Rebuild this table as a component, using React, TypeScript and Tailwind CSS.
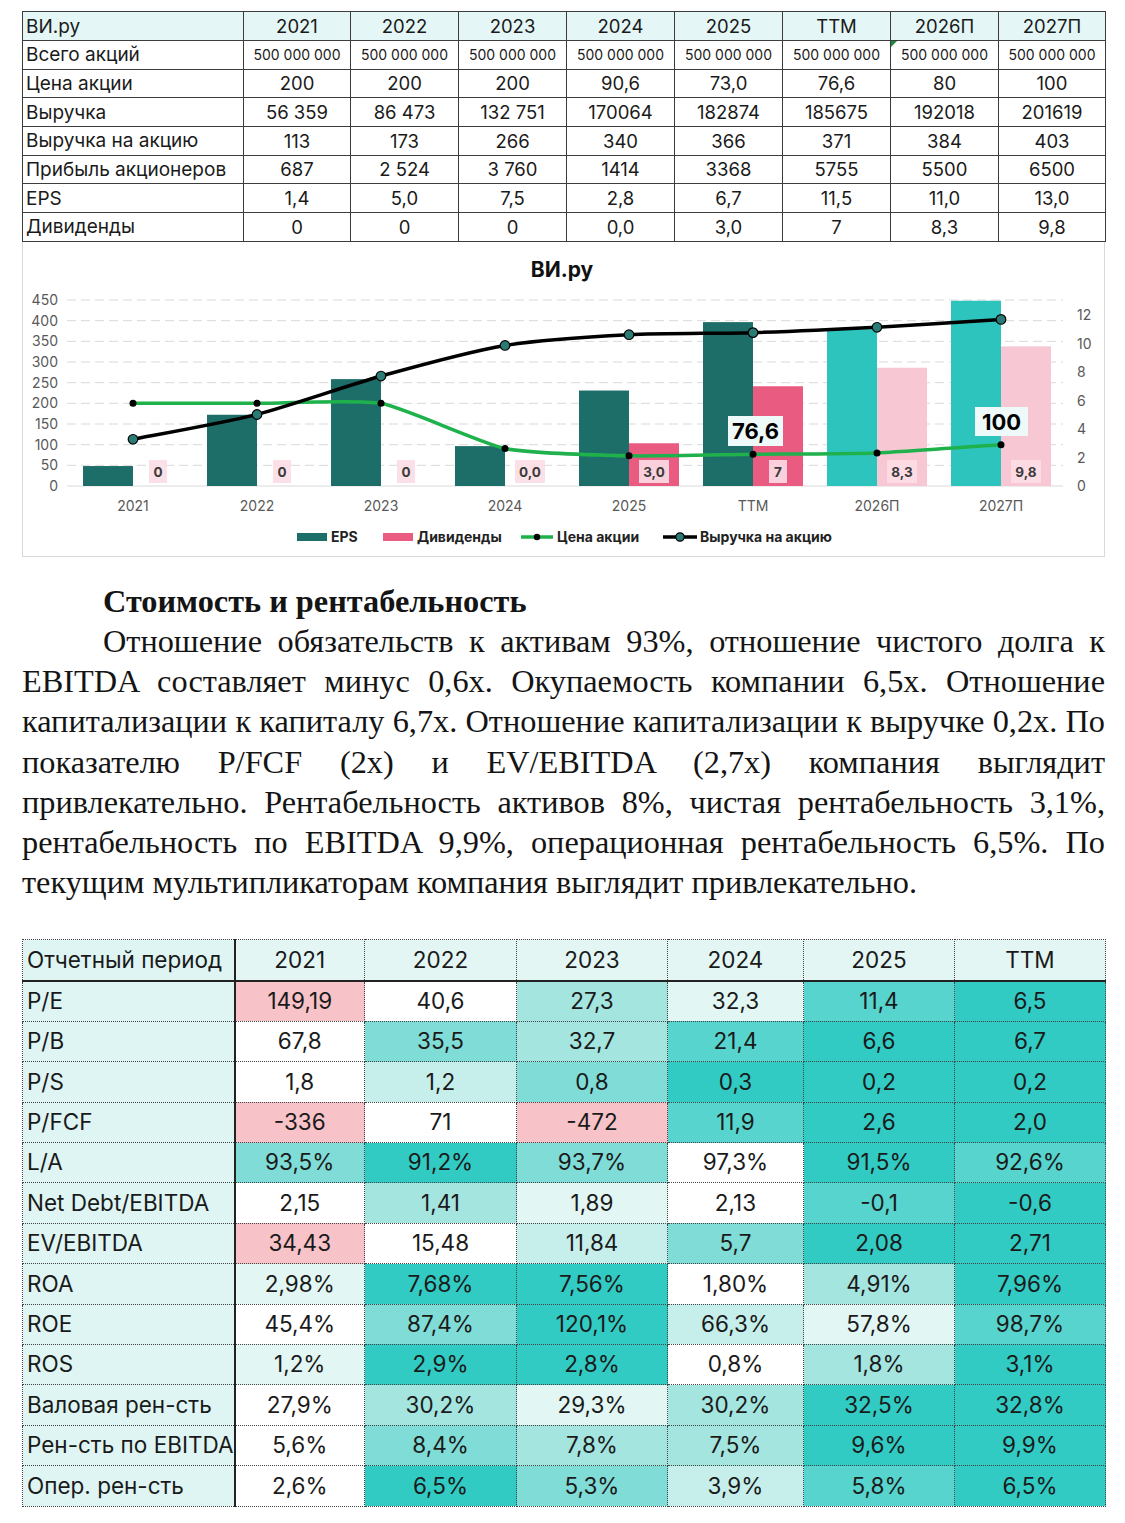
import React from "react";

const cats = ["2021", "2022", "2023", "2024", "2025", "TTM", "2026П", "2027П"];

const topRows: { label: string; vals: string[]; small?: boolean }[] = [
  { label: "Всего акций", vals: Array(8).fill("500 000 000"), small: true },
  { label: "Цена акции", vals: ["200", "200", "200", "90,6", "73,0", "76,6", "80", "100"] },
  { label: "Выручка", vals: ["56 359", "86 473", "132 751", "170064", "182874", "185675", "192018", "201619"] },
  { label: "Выручка на акцию", vals: ["113", "173", "266", "340", "366", "371", "384", "403"] },
  { label: "Прибыль акционеров", vals: ["687", "2 524", "3 760", "1414", "3368", "5755", "5500", "6500"] },
  { label: "EPS", vals: ["1,4", "5,0", "7,5", "2,8", "6,7", "11,5", "11,0", "13,0"] },
  { label: "Дивиденды", vals: ["0", "0", "0", "0,0", "3,0", "7", "8,3", "9,8"] },
];

const bg: Record<string, string> = {
  w: "bg-white",
  p: "bg-[#f7c2c8]",
  l1: "bg-[#e2f6f4]",
  l2: "bg-[#c6efeb]",
  m1: "bg-[#a4e5e0]",
  m2: "bg-[#80dcd6]",
  d1: "bg-[#56d4cd]",
  d2: "bg-[#31cbc4]",
};

const bottomHead = ["2021", "2022", "2023", "2024", "2025", "TTM"];
const bottomRows: { label: string; cells: [string, string][] }[] = [
  { label: "P/E", cells: [["149,19", "p"], ["40,6", "w"], ["27,3", "m1"], ["32,3", "l1"], ["11,4", "d1"], ["6,5", "d2"]] },
  { label: "P/B", cells: [["67,8", "w"], ["35,5", "m2"], ["32,7", "m1"], ["21,4", "d1"], ["6,6", "d2"], ["6,7", "d2"]] },
  { label: "P/S", cells: [["1,8", "w"], ["1,2", "l2"], ["0,8", "m2"], ["0,3", "d2"], ["0,2", "d2"], ["0,2", "d2"]] },
  { label: "P/FCF", cells: [["-336", "p"], ["71", "w"], ["-472", "p"], ["11,9", "d1"], ["2,6", "d2"], ["2,0", "d2"]] },
  { label: "L/A", cells: [["93,5%", "m2"], ["91,2%", "d2"], ["93,7%", "m2"], ["97,3%", "w"], ["91,5%", "d2"], ["92,6%", "d1"]] },
  { label: "Net Debt/EBITDA", cells: [["2,15", "w"], ["1,41", "m1"], ["1,89", "l1"], ["2,13", "w"], ["-0,1", "d1"], ["-0,6", "d2"]] },
  { label: "EV/EBITDA", cells: [["34,43", "p"], ["15,48", "w"], ["11,84", "l2"], ["5,7", "m2"], ["2,08", "d2"], ["2,71", "d2"]] },
  { label: "ROA", cells: [["2,98%", "l1"], ["7,68%", "d2"], ["7,56%", "d2"], ["1,80%", "w"], ["4,91%", "m1"], ["7,96%", "d2"]] },
  { label: "ROE", cells: [["45,4%", "w"], ["87,4%", "m2"], ["120,1%", "d2"], ["66,3%", "l2"], ["57,8%", "l1"], ["98,7%", "d1"]] },
  { label: "ROS", cells: [["1,2%", "l1"], ["2,9%", "d2"], ["2,8%", "d2"], ["0,8%", "w"], ["1,8%", "m1"], ["3,1%", "d2"]] },
  { label: "Валовая рен-сть", cells: [["27,9%", "w"], ["30,2%", "m1"], ["29,3%", "l1"], ["30,2%", "m1"], ["32,5%", "d2"], ["32,8%", "d2"]] },
  { label: "Рен-сть по EBITDA", cells: [["5,6%", "w"], ["8,4%", "m2"], ["7,8%", "m1"], ["7,5%", "m1"], ["9,6%", "d2"], ["9,9%", "d2"]] },
  { label: "Опер. рен-сть", cells: [["2,6%", "w"], ["6,5%", "d2"], ["5,3%", "m2"], ["3,9%", "l2"], ["5,8%", "d1"], ["6,5%", "d2"]] },
];

const eps = [1.4, 5.0, 7.5, 2.8, 6.7, 11.5, 11.0, 13.0];
const divs = [0, 0, 0, 0, 3.0, 7, 8.3, 9.8];
const divLabels = ["0", "0", "0", "0,0", "3,0", "7", "8,3", "9,8"];
const price = [200, 200, 200, 90.6, 73, 76.6, 80, 100];
const rev = [113, 173, 266, 340, 366, 371, 384, 403];

const BASE = 487;
const cx = (i: number) => 133 + 124 * i;
const yl = (v: number) => BASE - v * (186 / 450);
const yr = (v: number) => BASE - v * 14.25;

function smooth(pts: [number, number][], k: number) {
  let d = `M${pts[0][0]},${pts[0][1]}`;
  for (let i = 0; i < pts.length - 1; i++) {
    const p0 = pts[i - 1] || pts[i];
    const p1 = pts[i];
    const p2 = pts[i + 1];
    const p3 = pts[i + 2] || p2;
    const c1x = p1[0] + (p2[0] - p0[0]) * k;
    const c1y = p1[1] + (p2[1] - p0[1]) * k;
    const c2x = p2[0] - (p3[0] - p1[0]) * k;
    const c2y = p2[1] - (p3[1] - p1[1]) * k;
    d += ` C${c1x},${c1y} ${c2x},${c2y} ${p2[0]},${p2[1]}`;
  }
  return d;
}

function Chart() {
  const pricePts = price.map((v, i) => [cx(i), yl(v)] as [number, number]);
  const revPts = rev.map((v, i) => [cx(i), yl(v)] as [number, number]);
  const font = "Inter, 'Noto Sans', sans-serif";
  return (
    <svg width={1081} height={314} viewBox="23 243 1081 314" className="block" style={{ fontFamily: font }}>
      <text x={562} y={278} textAnchor="middle" fontSize={21} fontWeight={700} fill="#111">
        ВИ.ру
      </text>
      {[50, 100, 150, 200, 250, 300, 350, 400, 450].map((v) => (
        <line key={v} x1={67} x2={1063} y1={yl(v)} y2={yl(v)} stroke="#d9d9d9" strokeWidth={1} strokeDasharray="9 5" />
      ))}
      <line x1={67} x2={1063} y1={BASE} y2={BASE} stroke="#d9d9d9" strokeWidth={1} />
      {[0, 50, 100, 150, 200, 250, 300, 350, 400, 450].map((v) => (
        <text key={v} x={58} y={yl(v) + 5} textAnchor="end" fontSize={14} fill="#595959">
          {v}
        </text>
      ))}
      {[0, 2, 4, 6, 8, 10, 12].map((v) => (
        <text key={v} x={1077} y={yr(v) + 5} textAnchor="start" fontSize={14} fill="#595959">
          {v}
        </text>
      ))}
      {cats.map((c, i) => (
        <text key={c} x={cx(i)} y={512} textAnchor="middle" fontSize={14} fill="#595959">
          {c}
        </text>
      ))}
      {eps.map((v, i) => (
        <rect key={"e" + i} x={cx(i) - 50} y={yr(v)} width={50} height={BASE - yr(v)} fill={i < 6 ? "#1d6e69" : "#2dc4bd"} />
      ))}
      {divs.map((v, i) =>
        v > 0 ? (
          <rect key={"d" + i} x={cx(i)} y={yr(v)} width={50} height={BASE - yr(v)} fill={i < 6 ? "#e95b80" : "#f8c7d4"} />
        ) : null
      )}
      <path d={smooth(pricePts, 0.09)} fill="none" stroke="#1fb14b" strokeWidth={3.5} />
      <path d={smooth(revPts, 0.12)} fill="none" stroke="#000" strokeWidth={3.5} />
      {pricePts.map((p, i) => (
        <circle key={"pc" + i} cx={p[0]} cy={p[1]} r={3.5} fill="#000" />
      ))}
      {revPts.map((p, i) => (
        <circle key={"rc" + i} cx={p[0]} cy={p[1]} r={4.8} fill="#2a7b75" stroke="#000" strokeWidth={1.2} />
      ))}
      {divLabels.map((t, i) => {
        const w = t.length === 1 ? 18 : 30;
        const x = cx(i) + 25;
        return (
          <g key={"dl" + i}>
            <rect x={x - w / 2} y={461} width={w} height={23} fill="#fcdde6" opacity={0.9} />
            <text x={x} y={478} textAnchor="middle" fontSize={13.5} fontWeight={700} fill="#3a3a3a">
              {t}
            </text>
          </g>
        );
      })}
      <rect x={728} y={417} width={55} height={30} fill="#eef9f9" />
      <text x={755.5} y={440} textAnchor="middle" fontSize={22} fontWeight={700} fill="#000">
        76,6
      </text>
      <rect x={975} y={408} width={53} height={29} fill="#eef9f9" />
      <text x={1001.5} y={430.5} textAnchor="middle" fontSize={22} fontWeight={700} fill="#000">
        100
      </text>
      {/* legend */}
      <rect x={297} y={534} width={30} height={8} fill="#1d6e69" />
      <text x={331} y={543} fontSize={14} fontWeight={700} fill="#222">
        EPS
      </text>
      <rect x={383} y={534} width={30} height={8} fill="#e95b80" />
      <text x={417} y={543} fontSize={14} fontWeight={700} fill="#222">
        Дивиденды
      </text>
      <line x1={521} x2={553} y1={538} y2={538} stroke="#1fb14b" strokeWidth={3.5} />
      <circle cx={537} cy={538} r={3.2} fill="#000" />
      <text x={557} y={543} fontSize={14} fontWeight={700} fill="#222">
        Цена акции
      </text>
      <line x1={663} x2={697} y1={538} y2={538} stroke="#000" strokeWidth={3.5} />
      <circle cx={680} cy={538} r={4.2} fill="#2a7b75" stroke="#000" strokeWidth={1.2} />
      <text x={700} y={543} fontSize={14} fontWeight={700} fill="#222">
        Выручка на акцию
      </text>
    </svg>
  );
}

const paraLines = [
  "Отношение обязательств к активам 93%, отношение чистого долга к",
  "EBITDA составляет минус 0,6х. Окупаемость компании 6,5х. Отношение",
  "капитализации к капиталу 6,7х. Отношение капитализации к выручке 0,2х. По",
  "показателю P/FCF (2х) и EV/EBITDA (2,7х) компания выглядит",
  "привлекательно. Рентабельность активов 8%, чистая рентабельность 3,1%,",
  "рентабельность по EBITDA 9,9%, операционная рентабельность 6,5%. По",
];

export default function App() {
  return (
    <div className="w-[1125px] min-h-[1523px] bg-white pt-[11px] pl-[22px] pr-[20px] text-[#1a1a1a]">
      {/* Top table */}
      <table className="w-[1083px] table-fixed border-collapse font-['Inter','Noto_Sans',sans-serif] text-[18.5px] text-[#1a1a1a]">
        <colgroup>
          <col className="w-[221px]" />
          <col className="w-[107px]" />
          <col className="w-[108px]" />
          <col className="w-[108px]" />
          <col className="w-[108px]" />
          <col className="w-[108px]" />
          <col className="w-[108px]" />
          <col className="w-[108px]" />
          <col className="w-[107px]" />
        </colgroup>
        <thead>
          <tr className="h-[29px] bg-[#e4f6f6]">
            <th className="border border-[#3c3c3c] px-[3px] text-left text-[19px] font-normal leading-none">ВИ.ру</th>
            {cats.map((c) => (
              <th key={c} className="border border-[#3c3c3c] text-center font-normal leading-none">
                {c}
              </th>
            ))}
          </tr>
        </thead>
        <tbody>
          {topRows.map((r) => (
            <tr key={r.label} className="h-[28.7px]">
              <td className="border border-[#3c3c3c] px-[3px] text-left text-[19px] leading-none">{r.label}</td>
              {r.vals.map((v, i) => (
                <td
                  key={i}
                  className={
                    "relative border border-[#3c3c3c] text-center leading-none " + (r.small ? "text-[14px]" : "")
                  }
                >
                  {r.small && i === 6 ? (
                    <span className="absolute left-0 top-0 h-0 w-0 border-t-[6px] border-r-[6px] border-t-[#1f8a3c] border-r-transparent" />
                  ) : null}
                  {v}
                </td>
              ))}
            </tr>
          ))}
        </tbody>
      </table>

      {/* Chart */}
      <div className="w-[1083px] border-x border-b border-[#d9d9d9]">
        <Chart />
      </div>

      {/* Text */}
      <div className="mt-[24px] w-[1083px] font-['Liberation_Serif','Times_New_Roman',serif] text-[32.3px] leading-[40.2px] text-[#141414]">
        <div className="pl-[81px] font-bold">Стоимость и рентабельность</div>
        {paraLines.map((l, i) => (
          <div key={i} className={"text-justify [text-align-last:justify] " + (i === 0 ? "pl-[81px]" : "")}>
            {l}
          </div>
        ))}
        <div>текущим мультипликаторам компания выглядит привлекательно.</div>
      </div>

      {/* Bottom table */}
      <table className="mt-[37px] w-[1083px] table-fixed border-collapse font-['Inter','Noto_Sans',sans-serif] text-[22.5px] text-[#1a1a1a]">
        <colgroup>
          <col className="w-[212px]" />
          <col className="w-[130px]" />
          <col className="w-[152px]" />
          <col className="w-[151px]" />
          <col className="w-[136px]" />
          <col className="w-[151px]" />
          <col className="w-[151px]" />
        </colgroup>
        <thead>
          <tr className="h-[41px]">
            <th className="border border-dotted border-[#444] border-r-2 border-b-2 border-r-[#222] border-b-[#222] [border-right-style:solid] [border-bottom-style:solid] bg-[#def5f3] px-[4px] text-left font-normal leading-none">
              Отчетный период
            </th>
            {bottomHead.map((h) => (
              <th
                key={h}
                className="border border-dotted border-[#444] border-b-2 border-b-[#222] [border-bottom-style:solid] bg-[#e3f6f4] text-center font-normal leading-none"
              >
                {h}
              </th>
            ))}
          </tr>
        </thead>
        <tbody>
          {bottomRows.map((r) => (
            <tr key={r.label} className="h-[40.4px]">
              <td className="border border-dotted border-[#444] border-r-2 border-r-[#222] [border-right-style:solid] bg-[#def5f3] px-[4px] text-left leading-none whitespace-nowrap">
                {r.label}
              </td>
              {r.cells.map(([v, c], i) => (
                <td key={i} className={"border border-dotted border-[#444] text-center leading-none " + bg[c]}>
                  {v}
                </td>
              ))}
            </tr>
          ))}
        </tbody>
      </table>
    </div>
  );
}
